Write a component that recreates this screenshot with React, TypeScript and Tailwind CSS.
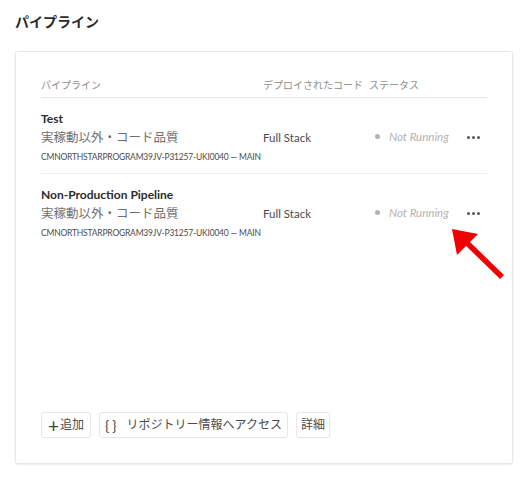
import React from 'react';

const rows = [
  { name: 'Test' },
  { name: 'Non-Production Pipeline' },
];

const App: React.FC = () => {
  return (
    <div
      className="relative w-[526px] h-[479px] bg-white text-[#4b4b4b]"
      style={{ fontFamily: 'Lato, "Noto Sans CJK JP", sans-serif' }}
    >
      <div className="pt-[12px] pl-[15px] pr-[13px]">
        <h1 className="text-[14px] font-bold text-[#2c2c2c] leading-[20px]">パイプライン</h1>
        <div className="mt-[19px] h-[413px] border border-[#e6e6e6] rounded-[3px] shadow-[0_1px_2px_rgba(0,0,0,0.08)] flex flex-col px-[25px]">
          <div className="mt-[23px] flex items-center h-[23px] border-b border-[#e8e8e8] text-[10px] text-[#8e8e8e] pb-[2px]">
            <span className="w-[222px]">パイプライン</span>
            <span className="w-[106px]">デプロイされたコード</span>
            <span>ステータス</span>
          </div>
          {rows.map((r, i) => (
            <div
              key={i}
              className={`relative flex flex-col pt-[13px] h-[76px] ${i === 0 ? 'border-b border-[#ececec]' : ''}`}
            >
              <span className="text-[12px] font-bold text-[#2c2c2c] leading-[16px]">{r.name}</span>
              <span className="text-[12.5px] text-[#6e6e6e] leading-[20px] mt-[1px]">実稼動以外・コード品質</span>
              <span className="text-[8.5px] text-[#4b4b4b] leading-[14px] mt-[2px] tracking-[-0.2px]">CMNORTHSTARPROGRAM39JV-P31257-UKI0040 — MAIN</span>
              <span className="absolute left-[222px] top-[31px] text-[11.5px] text-[#4b4b4b]">Full Stack</span>
              <span className="absolute left-[334px] top-[30px] flex items-center gap-[9px] text-[11.5px] italic text-[#b3b3b3]">
                <span className="w-[5px] h-[5px] rounded-full bg-[#b3b3b3]" />
                Not Running
              </span>
              <span className="absolute left-[426px] top-[38px] flex gap-[2px]">
                <span className="w-[3px] h-[3px] rounded-full bg-[#555]" />
                <span className="w-[3px] h-[3px] rounded-full bg-[#555]" />
                <span className="w-[3px] h-[3px] rounded-full bg-[#555]" />
              </span>
            </div>
          ))}
          <div className="mt-auto mb-[25px] flex gap-[8px] text-[12px] text-[#4b4b4b]">
            <button className="h-[26px] w-[50px] border border-[#e6e6e6] rounded-[3px] flex items-center justify-center gap-[1px]">
              <span className="text-[19px] leading-none text-[#444]">+</span>追加
            </button>
            <button className="h-[26px] w-[189px] border border-[#e6e6e6] rounded-[3px] flex items-center justify-center gap-[7px]">
              <span className="text-[14px] tracking-[3px] text-[#444]">{'{}'}</span>リポジトリー情報へアクセス
            </button>
            <button className="h-[26px] w-[34px] border border-[#e6e6e6] rounded-[3px]">詳細</button>
          </div>
        </div>
      </div>
      <svg className="absolute left-[448px] top-[225px]" width="60" height="60" viewBox="0 0 60 60">
        <line x1="54" y1="52" x2="18" y2="17" stroke="#f00000" strokeWidth="5.5" />
        <polygon points="4,4 30,9 9,30" fill="#f00000" />
      </svg>
    </div>
  );
};

export default App;
